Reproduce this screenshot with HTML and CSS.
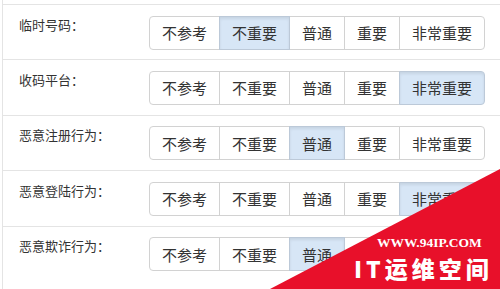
FILE: index.html
```html
<!DOCTYPE html>
<html lang="zh">
<head>
<meta charset="utf-8">
<link rel="stylesheet" href="styles.css">
</head>
<body>
<div class="panel">
  <div class="row">
    <div class="label">临时号码：</div>
    <div class="group">
      <span class="btn">不参考</span><span class="btn on">不重要</span><span class="btn">普通</span><span class="btn">重要</span><span class="btn">非常重要</span>
    </div>
  </div>
  <div class="row">
    <div class="label">收码平台：</div>
    <div class="group">
      <span class="btn">不参考</span><span class="btn">不重要</span><span class="btn">普通</span><span class="btn">重要</span><span class="btn on">非常重要</span>
    </div>
  </div>
  <div class="row">
    <div class="label">恶意注册行为：</div>
    <div class="group">
      <span class="btn">不参考</span><span class="btn">不重要</span><span class="btn on">普通</span><span class="btn">重要</span><span class="btn">非常重要</span>
    </div>
  </div>
  <div class="row">
    <div class="label">恶意登陆行为：</div>
    <div class="group">
      <span class="btn">不参考</span><span class="btn">不重要</span><span class="btn">普通</span><span class="btn">重要</span><span class="btn on">非常重要</span>
    </div>
  </div>
  <div class="row">
    <div class="label">恶意欺诈行为：</div>
    <div class="group">
      <span class="btn">不参考</span><span class="btn">不重要</span><span class="btn on">普通</span><span class="btn">重要</span><span class="btn">非常重要</span>
    </div>
  </div>
</div>
<div class="mark">
  <svg class="tri" width="230" height="120" viewBox="0 0 230 120"><polygon points="0,120 230,0 230,120" fill="#e8102a"/></svg>
  <div class="mark-url">WWW.94IP.COM</div>
  <div class="mark-name">IT运维空间</div>
</div>
</body>
</html>
```

FILE: styles.css
```css
html, body {
  margin: 0;
  padding: 0;
  background: #fff;
  overflow: hidden;
}
body {
  width: 500px;
  height: 289px;
  position: relative;
  font-family: "Noto Sans CJK SC", "Noto Sans", sans-serif;
  color: #333;
}
.panel {
  margin-left: 2px;
  padding-top: 4px;
  border-left: 1px solid #e4e4e4;
  height: 285px;
}
.row {
  display: flex;
  align-items: flex-start;
  border-top: 1px solid #e4e4e4;
  height: 55.4px;
  box-sizing: border-box;
  padding-top: 10.5px;
}
.label {
  width: 130px;
  padding-left: 16px;
  font-size: 13px;
  line-height: 18px;
  color: #333;
}
.group {
  display: flex;
  height: 34px;
}
.btn {
  display: flex;
  align-items: center;
  padding: 0 12px;
  height: 34px;
  box-sizing: border-box;
  border: 1px solid #d2d2d2;
  margin-left: -1px;
  font-size: 15px;
  color: #333;
  background: #fff;
}
.btn:first-child {
  margin-left: 0;
  border-radius: 4px 0 0 4px;
}
.btn:last-child {
  border-radius: 0 4px 4px 0;
}
.btn.on {
  background: #d7e6f6;
  border-color: #bcc9d8;
  box-shadow: inset 0 2px 3px rgba(0, 0, 0, 0.08);
  position: relative;
}
.mark {
  position: absolute;
  right: 0;
  bottom: 0;
  width: 230px;
  height: 120px;
}
.tri {
  position: absolute;
  left: 0;
  top: 0;
  display: block;
}
.mark-url {
  position: absolute;
  left: 107px;
  top: 66px;
  font-family: "Liberation Serif", serif;
  font-weight: bold;
  font-size: 13.5px;
  color: #fff;
  line-height: 16px;
  white-space: nowrap;
}
.mark-name {
  position: absolute;
  left: 84px;
  top: 85px;
  font-family: "Noto Sans CJK SC", sans-serif;
  font-weight: 900;
  font-size: 23px;
  letter-spacing: 4px;
  color: #fff;
  line-height: 28px;
  white-space: nowrap;
}
```
